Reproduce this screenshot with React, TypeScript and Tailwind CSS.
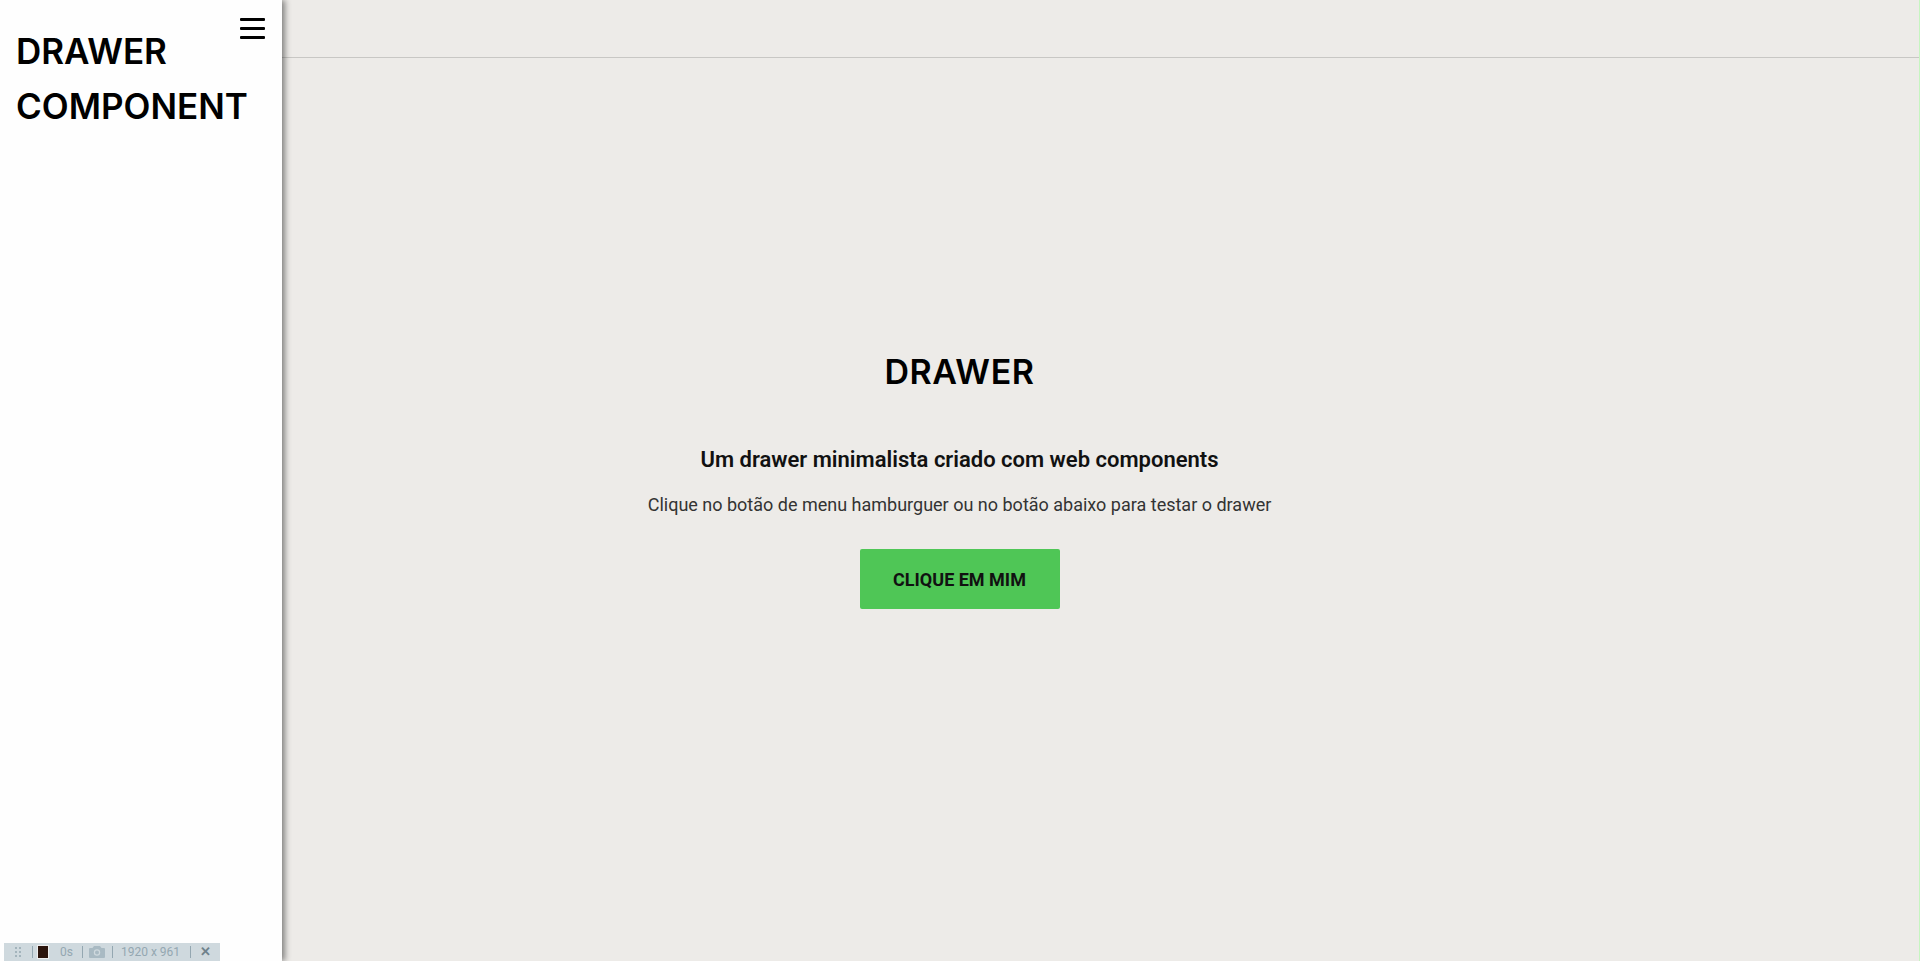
import React from "react";

export default function App() {
  return (
    <div className="relative w-[1920px] h-[961px] overflow-hidden bg-[#edebe8]" style={{ fontFamily: "Roboto, 'Liberation Sans', sans-serif" }}>
      <div className="flex h-full">
        <div className="flex-1 flex flex-col">
          <div className="h-[58px] border-b border-[#c8c7c4] shrink-0" />
          <div className="flex flex-col items-center pt-[290px]">
            <h1 className="text-[34px] leading-[48px] font-semibold text-black tracking-[0.6px]" style={{ fontFamily: "Inter, 'Noto Sans', sans-serif" }}>
              DRAWER
            </h1>
            <h2 className="mt-[49px] text-[22px] leading-[30px] font-semibold text-[#111]">
              Um drawer minimalista criado com web components
            </h2>
            <p className="mt-[17px] text-[18px] leading-[26px] text-[#333]">
              Clique no botão de menu hamburguer ou no botão abaixo para testar o drawer
            </p>
            <button className="mt-[31px] w-[200px] h-[60px] rounded-[2px] bg-[#4fc656] text-[18px] font-bold text-[#111] uppercase">
              Clique em mim
            </button>
          </div>
        </div>
        <div className="w-[1px] bg-[#c6f5c0]" />
      </div>

      <aside className="absolute left-0 top-0 h-full w-[282px] bg-[#fefefe] shadow-[3px_0_6px_rgba(0,0,0,0.45)] pl-[16px] pt-[24px]">
        <div className="text-[35px] leading-[55px] font-semibold text-black" style={{ fontFamily: "Inter, 'Noto Sans', sans-serif" }}>
          DRAWER
          <br />
          COMPONENT
        </div>
        <button className="absolute right-[17px] top-[18px] w-[25px] h-[21px] flex flex-col justify-between" aria-label="menu">
          <span className="block h-[3px] w-full bg-black rounded-[1px]" />
          <span className="block h-[3px] w-full bg-black rounded-[1px]" />
          <span className="block h-[3px] w-full bg-black rounded-[1px]" />
        </button>
      </aside>

      <div className="absolute left-[4px] bottom-0 h-[18px] w-[216px] bg-[#cfd9de] flex items-center text-[12px] text-[#94a7b1]">
        <div className="w-[28px] flex justify-center">
          <svg width="6" height="10" viewBox="0 0 6 10" fill="#94a7b1">
            <circle cx="1" cy="1" r="1" /><circle cx="5" cy="1" r="1" />
            <circle cx="1" cy="5" r="1" /><circle cx="5" cy="5" r="1" />
            <circle cx="1" cy="9" r="1" /><circle cx="5" cy="9" r="1" />
          </svg>
        </div>
        <div className="w-[1px] h-[12px] bg-[#94a7b1]" />
        <div className="ml-[4px] w-[12px] h-[14px] border border-[#eee] bg-[#2b140c]" />
        <span className="ml-[11px]">0s</span>
        <div className="ml-[9px] w-[1px] h-[12px] bg-[#94a7b1]" />
        <svg className="ml-[6px]" width="16" height="12" viewBox="0 0 16 12" fill="#a9bac3">
          <path d="M5 0h6l1.5 2H15a1 1 0 0 1 1 1v8a1 1 0 0 1-1 1H1a1 1 0 0 1-1-1V3a1 1 0 0 1 1-1h2.5z" />
          <circle cx="8" cy="6.5" r="3.2" fill="#cfd9de" />
          <circle cx="8" cy="6.5" r="2" fill="#a9bac3" />
        </svg>
        <div className="ml-[7px] w-[1px] h-[12px] bg-[#94a7b1]" />
        <span className="ml-[8px]">1920 x 961</span>
        <div className="ml-[10px] w-[1px] h-[12px] bg-[#94a7b1]" />
        <span className="ml-[9px] text-[13px] font-bold text-[#6f828c]">✕</span>
      </div>
    </div>
  );
}
